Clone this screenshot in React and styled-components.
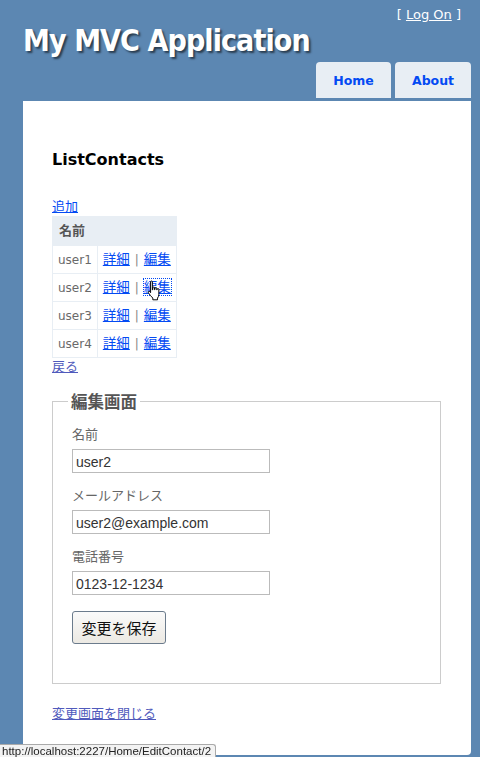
import React from "react";
import styled, { createGlobalStyle } from "styled-components";

const GlobalStyle = createGlobalStyle`
  html, body {
    margin: 0;
    padding: 0;
    background: #5c87b2;
    font-family: "DejaVu Sans", "Noto Sans CJK JP", sans-serif;
    color: #696969;
  }
`;

const Page = styled.div`
  width: 448px;
  margin-left: 23px;
`;

const Header = styled.header`
  display: flex;
  flex-direction: column;
`;

const TopBar = styled.div`
  display: flex;
  justify-content: space-between;
  align-items: flex-start;
`;

const Title = styled.h1`
  margin: 24px 0 0 0;
  font-family: "DejaVu Sans Condensed", "DejaVu Sans", sans-serif;
  font-stretch: condensed;
  font-weight: bold;
  font-size: 30px;
  line-height: 34px;
  color: #fff;
  text-shadow: 2px 2px 2px rgba(0, 0, 0, 0.55);
  letter-spacing: -0.9px;
`;

const LogOn = styled.div`
  margin: 7px 10px 0 0;
  font-family: "DejaVu Sans", sans-serif;
  font-size: 13px;
  line-height: 16px;
  color: #fff;
  a {
    color: #fff;
    text-decoration: underline;
  }
`;

const Menu = styled.nav`
  display: flex;
  justify-content: flex-end;
  gap: 4px;
  margin-top: 4px;
`;

const Tab = styled.a`
  width: ${(p) => p.w}px;
  height: 36px;
  display: flex;
  align-items: center;
  justify-content: center;
  background: #e8eef4;
  border-radius: 4px 4px 0 0;
  color: #034af3;
  font-weight: bold;
  font-size: 12.5px;
  text-decoration: none;
`;

const Main = styled.main`
  position: relative;
  margin-top: 3px;
  background: #fff;
  min-height: 654px;
  box-sizing: border-box;
  padding: 48px 30px 20px 29px;
  border-radius: 0 0 4px 4px;
`;

const Heading = styled.h2`
  margin: 0 0 27px 0;
  font-size: 16px;
  line-height: 22px;
  font-weight: bold;
  color: #000;
`;

const Link = styled.a`
  color: ${(p) => (p.visited ? "#505abc" : "#034af3")};
  text-decoration: underline;
  font-size: ${(p) => (p.small ? "13.5px" : "13px")};
  line-height: ${(p) => (p.small ? "14px" : "18px")};
  outline: ${(p) => (p.focused ? "1px dotted #034af3" : "none")};
`;

const Block = styled.div`
  line-height: 18px;
  height: 18px;
  font-size: 13px;
`;

const Table = styled.table`
  border-collapse: collapse;
  font-size: 12px;
  th {
    background: #e8eef4;
    border: 1px solid #e8eef4;
    padding: 6px 6px;
    height: 16px;
    line-height: 14px;
    text-align: left;
    color: #555;
    font-size: 13px;
    font-weight: bold;
  }
  td {
    border: 1px solid #e8eef4;
    padding: 5px 5px;
    height: 17px;
    line-height: 14px;
    color: #696969;
    white-space: nowrap;
  }
`;

const Sep = styled.span`
  color: #888;
  margin: 0 5px;
`;

const CellWrap = styled.span`
  position: relative;
`;

const Cursor = styled.svg`
  position: absolute;
  left: 3px;
  top: -1px;
  pointer-events: none;
`;

const Fieldset = styled.fieldset`
  margin: 14px 0 0 0;
  width: 389px;
  box-sizing: border-box;
  border: 1px solid #ccc;
  padding: 13px 19px 39px 19px;
  min-width: 0;
`;

const Legend = styled.legend`
  margin-left: -4px;
  padding: 0 3px;
  font-size: 16.5px;
  line-height: 22px;
  font-weight: bold;
  color: #555;
  font-family: "Noto Sans CJK JP", sans-serif;
`;

const Field = styled.div`
  display: flex;
  flex-direction: column;
  align-items: flex-start;
  margin-top: ${(p) => (p.first ? "0" : "13px")};
`;

const Label = styled.label`
  font-family: "Noto Sans CJK JP", sans-serif;
  font-size: 13px;
  line-height: 18px;
  color: #666;
  margin-bottom: 6px;
`;

const Input = styled.input`
  width: 198px;
  height: 24px;
  box-sizing: border-box;
  border: 1px solid #bbb;
  padding: 1px 3px 0;
  font-family: "Liberation Sans", "Noto Sans CJK JP", sans-serif;
  font-size: 14px;
  color: #333;
  outline: none;
`;

const Button = styled.button`
  display: block;
  margin-top: 16px;
  width: 94px;
  height: 33px;
  border: 1px solid #6b7b8c;
  border-radius: 3px;
  background: linear-gradient(#fafafa, #ece9e3);
  font-family: "Noto Sans CJK JP", sans-serif;
  font-size: 15px;
  color: #111;
  padding: 0;
`;

const Close = styled.div`
  margin-top: 20px;
  line-height: 18px;
`;

const StatusBar = styled.div`
  position: fixed;
  left: 0;
  bottom: 0;
  width: 213px;
  height: 12px;
  padding-left: 2px;
  background: #f3f3f3;
  border: 1px solid #aaa;
  border-left: none;
  border-bottom: none;
  border-radius: 0 3px 0 0;
  font-family: "Liberation Sans", sans-serif;
  font-size: 11.5px;
  line-height: 12px;
  color: #222;
  white-space: nowrap;
  overflow: hidden;
`;

const users = ["user1", "user2", "user3", "user4"];

export default function App() {
  return (
    <>
      <GlobalStyle />
      <Page>
        <Header>
          <TopBar>
            <Title>My MVC Application</Title>
            <LogOn>
              [ <a href="#">Log On</a> ]
            </LogOn>
          </TopBar>
          <Menu>
            <Tab w={75} href="#">Home</Tab>
            <Tab w={76} href="#">About</Tab>
          </Menu>
        </Header>
        <Main>
          <Heading>ListContacts</Heading>
          <Block>
            <Link href="#">追加</Link>
          </Block>
          <Table>
            <thead>
              <tr>
                <th colSpan={2}>名前</th>
              </tr>
            </thead>
            <tbody>
              {users.map((u, i) => (
                <tr key={u}>
                  <td>{u}</td>
                  <td>
                    <Link href="#" small>詳細</Link>
                    <Sep>|</Sep>
                    <CellWrap>
                      <Link href="#" small focused={i === 1}>編集</Link>
                      {i === 1 && (
                        <Cursor width="16" height="22" viewBox="0 0 14 20">
                          <path
                            d="M3 1.5c0-.8 1.6-.8 1.6 0V9l.4-.2V7c0-.8 1.6-.8 1.6 0v1.8l.4-.1V7.6c0-.8 1.6-.8 1.6 0v1.3l.4-.1V8.4c0-.8 1.5-.8 1.5 0V13c0 1.5-.6 2.5-1.2 3.5V18H5v-1.6C4 15.5 1.5 12.5 1 11.5c-.5-1 .6-1.7 1.3-.9L3 11.5z"
                            fill="#fff"
                            stroke="#000"
                            strokeWidth="0.9"
                            strokeLinejoin="round"
                          />
                        </Cursor>
                      )}
                    </CellWrap>
                  </td>
                </tr>
              ))}
            </tbody>
          </Table>
          <Block>
            <Link href="#" visited>戻る</Link>
          </Block>
          <Fieldset>
            <Legend>編集画面</Legend>
            <Field first>
              <Label>名前</Label>
              <Input defaultValue="user2" />
            </Field>
            <Field>
              <Label>メールアドレス</Label>
              <Input defaultValue="user2@example.com" />
            </Field>
            <Field>
              <Label>電話番号</Label>
              <Input defaultValue="0123-12-1234" />
            </Field>
            <Button>変更を保存</Button>
          </Fieldset>
          <Close>
            <Link href="#" visited>変更画面を閉じる</Link>
          </Close>
        </Main>
      </Page>
      <StatusBar>http://localhost:2227/Home/EditContact/2</StatusBar>
    </>
  );
}
